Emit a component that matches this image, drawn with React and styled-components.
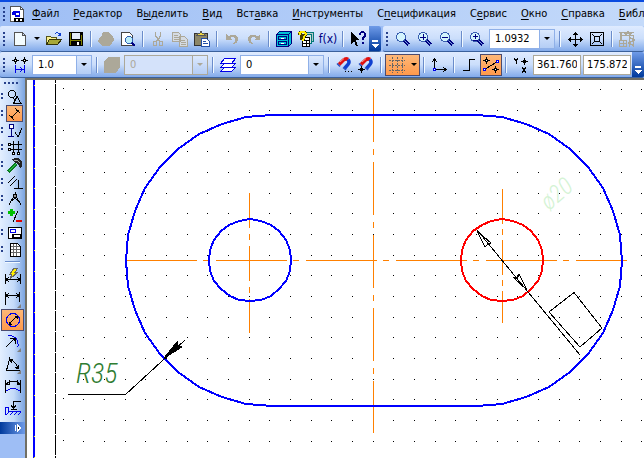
import styled, { createGlobalStyle } from "styled-components"

const GlobalStyle = createGlobalStyle`
  * {
    box-sizing: border-box;
  }
  body {
    margin: 0;
    overflow: hidden;
    font-family: "DejaVu Sans Condensed", "DejaVu Sans", sans-serif;
    font-size: 11px;
    color: #000;
  }
  button, select, input {
    font: inherit;
    color: inherit;
  }
`;

const K = "#000";
const B = "#0000e8";
const G = "#aca899";
const N = "#000080";

const magnifier = (
  <>
    <path d="M9 9l5 5" stroke={N} strokeWidth="3" />
    <path d="M10 10l4 4" stroke="#7ba4e0" />
    <circle cx="6" cy="6" r="4.5" fill="#d4f4fc" stroke="#3a5fb0" />
  </>
);

const magnet = (
  <g fill="none" shapeRendering="auto">
    <path d="M3 7.500L7.500 3Q10 1 12 2.500" stroke="#e01010" strokeWidth="3.500" />
    <path d="M12 2.500Q14 5 12 7.500L8.500 11.500" stroke="#1040d0" strokeWidth="3.500" />
    <path d="M4 5L8 1.500" stroke="#ff9080" />
    <path d="M1 6.500l3 3M7 10.500l3 2.500" stroke="#2a50c0" strokeWidth="1.500" />
  </g>
);

const icons = {
  doc: (
    <>
      <path d="M1.500.5h10l3 3v12h-13z" fill="#fff" stroke="#555" />
      <path d="M11.500.5v3h3" fill="none" stroke="#555" />
      <path d="M3 6h1v3H3zM4 5h7v6H6V9H4z" fill="#0000e0" />
      <path d="M7 7h3v2H7z" fill="#fff" />
      <path d="M5 12h10v4H5z" fill={K} />
      <path d="M7 13h2v2H7zM11 13h2v2h-2z" fill="#fff" />
    </>
  ),
  fresh: <path d="M2.500 1.500h8l3 3v10h-11zM10.500 1.500v3h3" fill="#f4fcff" stroke="#555" />,
  open: (
    <>
      <path d="M.5 13.500v-8h4l1 1h5v3" fill="#f8f090" stroke="#55551a" />
      <path d="M.5 13.500l3-5h12l-4 5z" fill="#a8a838" stroke="#33330a" />
      <path d="M9 3Q12 0 14 4M12 4h3M14.500 2v3" fill="none" stroke="#1040d0" />
    </>
  ),
  save: (
    <>
      <path d="M1 1h14v14H1z" fill={K} />
      <path d="M2 2h1v12H2zM13 4h1v10h-1z" fill="#808000" />
      <path d="M4 2h8v6H4z" fill="#e4ecf8" />
      <path d="M3 9h10v1H3z" fill="#808000" />
      <path d="M9 11h2v3H9z" fill="#fff" />
    </>
  ),
  print: <path d="M5 1h6l2 3 2 1 1 4-2 3-3 3H4l-4-4 1-4 3-3z" fill={G} />,
  preview: (
    <>
      <path d="M1.500 1.500h8l3 3v10h-11z" fill="#fff" stroke="#444" />
      <path d="M11 11l4 4" stroke={N} strokeWidth="2" />
      <circle cx="9" cy="9" r="3.500" fill="#bdeef8" stroke="#3060b0" />
    </>
  ),
  cut: (
    <path d="M5.500 1v4l4 5M10.500 1v4L7 10M3.500 10.500h3v4h-3zM9.500 10.500h3v4h-3z" fill="none" stroke={G} strokeWidth="1.500" />
  ),
  copy: (
    <>
      <path d="M.5 1.500h6l2 2v7h-8zM7.500 5.500h5l3 3v7h-8z" fill="#d5dbe3" stroke={G} />
      <path d="M2 4h4M2 6h5M2 8h5M9 9h4M9 11h5M9 13h5" stroke={G} />
    </>
  ),
  paste: (
    <>
      <path d="M.5 2.500h13v12H.5z" fill="#8c8668" stroke="#333" />
      <path d="M3 4h8l-1-2H8L7 0 6 2H4z" fill="#f0d840" stroke="#555" />
      <path d="M7.500 7.500h5l3 3v5h-8z" fill="#fff" stroke="#234fa8" />
      <path d="M9 10h3M9 12h5" stroke="#234fa8" />
    </>
  ),
  undo: <path d="M2 3v6h6L6 7q5-2 5 2 0 3-3 4 6 0 6-5 0-6-10-3z" fill={G} />,
  redo: <path d="M14 3v6H8l2-2q-5-2-5 2 0 3 3 4-6 0-6-5 0-6 10-3z" fill={G} />,
  drawer: (
    <>
      <path d="M.5 3.500l3-3h12v12l-3 3H.5z" fill="#00c4d4" stroke={N} />
      <path d="M.5 3.500h12v12M12.500 3.500l3-3M2.500 5.500h8v3h-8zM2.500 10.500h8v3h-8z" fill="none" stroke={N} />
      <path d="M5 7.500h3M5 12.500h3" stroke="#fff" />
    </>
  ),
  vars: (
    <>
      <path d="M8.500 1.500h7v9h-7z" fill="#b9c6c8" stroke="#007878" />
      <path d="M6.500 3.500h7v9h-7z" fill="#d6e2e2" stroke="#007878" />
      <path d="M4.500 6.500h7v9h-7z" fill="#fff" stroke={K} />
      <path d="M5 9.500h6M5 12.500h6M8.500 10v6" stroke={K} />
      <path d="M1.500 4V2l2-1.500h2L7.500 2v2l-2 2v1h-2V5l1.500-2M3.500 8.500h2" fill="none" stroke="#443d00" strokeWidth="3" />
      <path d="M1.500 4V2l2-1.500h2L7.500 2v2l-2 2v1h-1M3.500 8.500h2" fill="none" stroke="#ffee00" strokeWidth="2" />
    </>
  ),
  help: (
    <>
      <path d="M1 1v12l3-3 2 5h2L6 9h4z" fill={K} />
      <path d="M10 4Q10 1 12.500 1T15 4Q15 6 12.500 7v2M12.500 11v2" fill="none" stroke={N} strokeWidth="2" />
    </>
  ),
  zoom: magnifier,
  zoomIn: <>{magnifier}<path d="M3 6.500h6M6.500 3v6" stroke={N} /></>,
  zoomOut: <>{magnifier}<path d="M3 6.500h6" stroke={N} /></>,
  zoomBoth: <>{magnifier}<path d="M4 5.500h5M6.500 3v5M4 9.500h5" stroke={N} /></>,
  pan: (
    <path d="M8.500 1v15M1 8.500h15M6 3.500h5M6 13.500h5M3.500 6v5M13.500 6v5M7 2.500h3M7 14.500h3M2.500 7v3M14.500 7v3" stroke={K} />
  ),
  fit: (
    <>
      <path d="M1.500 1.500h13v13h-13zM5.500 5.500h5v5h-5z" fill="none" stroke={K} />
      <path d="M3 3l3 3M13 3l-3 3M3 13l3-3M13 13l-3-3" stroke={K} />
    </>
  ),
  crane: (
    <>
      <path d="M0 1.500h15M1 4.500h14M2 1v8M5 1l2 3 2-3 2 3 2-3M10.500 4v12M14.500 4v12M10 6l5 3-5 3 5 3" fill="none" stroke={G} strokeWidth="1.500" />
      <path d="M.5 9.500h7v6h-7zM4.500 9v7M0 12.500h8" fill="none" stroke={G} />
    </>
  ),
  step: (
    <>
      <path d="M0 3.500h7M3.500 0v7M9 3.500h7M12.500 0v7" stroke={K} />
      <path d="M2.500 2.500h2v2h-2zM11.500 2.500h2v2h-2z" fill="#fff" stroke={K} />
      <path d="M3.500 8v8M12.500 8v8M4 12.500h8M8 10.500l3 2-3 2" fill="none" stroke={B} />
    </>
  ),
  cube: <path d="M5 0h11v10l-2 3-3 3H0V5l2-3z" fill={G} />,
  layers: (
    <>
      <path d="M.5 14.500l4-4h11l-4 4z" fill="#fff" stroke={B} />
      <path d="M.5 10.500l4-4h11l-4 4z" fill="#fff" stroke={B} />
      <path d="M.5 6.500l4-5h11l-4 5z" fill="#fff" stroke={B} />
    </>
  ),
  magnet: <>{magnet}<path d="M9 14h1v1H9zM12 14h1v1h-1zM15 14h1v1h-1z" fill={K} /></>,
  magnetPoint: <>{magnet}<path d="M0 12.500h7M3.500 9v7M2.500 11.500h2v2h-2z" fill="#fff" stroke={K} /></>,
  grid: <path d="M0 3.500h16M0 8.500h16M0 13.500h16M3.500 0v16M8.500 0v16M13.500 0v16" stroke="#666" strokeDasharray="2 1" />,
  axes: (
    <>
      <path d="M3.500 2v12M3 12.500h12M1 5l2.500-3L6 5M12 10l3 2.500-3 2.500" fill="none" stroke={K} />
      <path d="M2.500 11.500h2v2h-2z" fill="#fff" stroke={B} />
    </>
  ),
  ortho: <path d="M2 13.500h6.500v-11H14" fill="none" stroke={K} />,
  snap: (
    <>
      <path d="M0 3.500h7M3.500 0v7M9 12.500h7M12.500 9v7" stroke={K} />
      <path d="M2.500 2.500h2v2h-2zM11.500 11.500h2v2h-2z" fill="#fff" stroke={K} />
      <path d="M2 12L14 5" stroke={K} />
      <path d="M.5 11.500h2v2h-2zM13.500 3.500h2v2h-2z" fill="#fff" stroke={B} />
    </>
  ),
  yx: (
    <>
      <path d="M1 1l2 3 2-3M3 4v3M9 10l4 6M13 10l-4 6" fill="none" stroke={K} />
      <path d="M8 4.500h7M11.500 1v7M10.500 3.500h2v2h-2z" fill="#fff" stroke={K} />
    </>
  ),
  shapes: (
    <>
      <circle cx="5" cy="5" r="3.500" fill="none" stroke={K} />
      <path d="M6.500 14.500l3.500-7 4 7zM5 8l4 4" fill="none" stroke={K} />
    </>
  ),
  dims: (
    <>
      <path d="M2 9l5 5M9 2l5 5M4 12l8-8" stroke={K} />
      <path d="M4 12V9l3 3zM12 4H9l3 3z" fill={K} />
    </>
  ),
  marks: (
    <>
      <path d="M2.500 1.500h4v4h-4z" fill="#fff" stroke={N} />
      <path d="M4.500 6v7M1 13.500h6" stroke={N} strokeWidth="1.500" />
      <path d="M8 9l3 5 4-9" fill="none" stroke={K} />
    </>
  ),
  nodes: (
    <>
      <path d="M2 4.500h13M2 9.500h13M6.500 1v12M11.500 1v12" stroke={K} />
      <path d="M1.500 3.500h2v2h-2zM1.500 8.500h2v2h-2zM5.500 12.500h2v2h-2zM10.500 12.500h2v2h-2z" fill="#fff" stroke={K} />
    </>
  ),
  hammer: (
    <>
      <path d="M1 15L9 7" stroke="#0a7a20" strokeWidth="3" />
      <path d="M2 14L9 7" stroke="#30d050" />
      <path d="M4 3l4-2h3l4 4v4l-2 2-2-4-3-1-1-2z" fill="#222" />
      <path d="M7 3h3l3 3" fill="none" stroke="#aaa" />
    </>
  ),
  params: <path d="M1 9l7-7M3 12l7-7M11.500 6v8M7 14.500h9" stroke={K} />,
  compass: (
    <>
      <path d="M2 14L7 5M14 14L9 5M5 10l3-3 3 3" fill="none" stroke={K} />
      <path d="M8 1v2M6.500 3.500h3v3h-3z" fill="#999" stroke={K} />
    </>
  ),
  edit: (
    <>
      <path d="M1 4.500h7M4.500 1v7" stroke="#00c000" strokeWidth="3" />
      <path d="M6 14l5-11" stroke={K} />
      <path d="M9 13h6" stroke="#e00000" strokeWidth="2" />
    </>
  ),
  spec: (
    <>
      <path d="M1.500 2.500h13v11h-13z" fill="#fff" stroke={K} />
      <path d="M3.500 4.500h5v3h-5z" fill="#fff" stroke={B} />
      <path d="M5 9h9v4H5z" fill={K} />
      <path d="M7 10h6v2H7z" fill="#fff" />
    </>
  ),
  report: (
    <>
      <path d="M3.500 1.500h7l3 3v10h-10z" fill="#fff" stroke={K} />
      <path d="M4 4.500h9M4 7.500h9M4 10.500h9M6.500 2v12M9.500 2v12" stroke="#666" />
    </>
  ),
  autoDim: (
    <>
      <path d="M.5 6v10M15.500 6v10M1 11.500h14M4 9l-3 2.500L4 14M12 9l3 2.500-3 2.500" fill="none" stroke={K} />
      <path d="M9 0h4l-3 4h3L5 11l2-5H5z" fill="#ffee00" stroke="#666" />
    </>
  ),
  linear: <path d="M.5 2v13M14.500 2v10M1 5.500h13M4 3l-3 2.500L4 8M11 3l3 2.500L11 8" fill="none" stroke={K} />,
  diameter: (
    <>
      <circle cx="8" cy="8" r="6.500" fill="none" stroke={B} />
      <path d="M4 12l8-8" stroke={K} />
      <path d="M3.500 12.500V9L7 12.500zM12.500 3.500V7L9 3.500z" fill={K} />
    </>
  ),
  radius: (
    <>
      <path d="M3 1Q14 2 13 13" fill="none" stroke={B} />
      <path d="M1 13l9-9M5 4.500h5.500V10" fill="none" stroke={K} />
      <path d="M10 4v4L6 4z" fill={K} />
    </>
  ),
  angle: <path d="M5 1L1.500 14.500H15M5 4Q11 5 13 13M8 3L5 4l2 3M10 11l3 2 1-4" fill="none" stroke={K} />,
  arcLen: (
    <>
      <path d="M.5 2v13M15.500 2v13M1 6Q8 0 15 6M4 2v4H1M12 2v4h3" fill="none" stroke={K} />
      <path d="M1 13Q8 8 15 13" fill="none" stroke={B} />
    </>
  ),
  height: (
    <>
      <path d="M8.500 9V1.500H16M6 5l2.500 4L11 5M6 9.500h6" fill="none" stroke={K} />
      <path d="M.5 15V7.500h3v4H16M1 15l3-3M5 15l3-3M9 15l3-3M13 15l3-3" fill="none" stroke={B} />
    </>
  ),
};

const Icon = ({ name }) => (
  <svg width="16" height="16" viewBox="0 0 16 16" shapeRendering="crispEdges" aria-hidden="true">
    {icons[name]}
  </svg>
);

const Tool = ({ icon, label, active, disabled }) => (
  <ToolButton type="button" aria-label={label} $active={active} disabled={disabled}>
    <Icon name={icon} />
  </ToolButton>
);

const Combo = ({ label, value, width, disabled }) => (
  <ComboBox $width={width} $disabled={disabled}>
    <select aria-label={label} defaultValue={value} disabled={disabled}>
      <option>{value}</option>
    </select>
    <ComboArrow $disabled={disabled}><Triangle $disabled={disabled} /></ComboArrow>
  </ComboBox>
);

const Overflow = () => (
  <Cap type="button" aria-label="Параметры панели">
    <svg width="7" height="8" shapeRendering="crispEdges" aria-hidden="true">
      <path d="M0 0h6v2H0zM0 4h7L3.500 8z" fill="#fff" />
    </svg>
  </Cap>
);

// text before the hot letter, the letter itself, the rest
const menu = [
  ["", "Ф", "айл"],
  ["", "Р", "едактор"],
  ["В", "ы", "делить"],
  ["", "В", "ид"],
  ["Вст", "а", "вка"],
  ["", "И", "нструменты"],
  ["С", "п", "ецификация"],
  ["С", "е", "рвис"],
  ["", "О", "кно"],
  ["", "С", "правка"],
  ["", "Б", "иблиотеки"],
];

const groups = [
  ["shapes", "Геометрия"],
  ["dims", "Размеры"],
  ["marks", "Обозначения"],
  ["nodes", "Обозначения для строительства"],
  ["hammer", "Редактирование"],
  ["params", "Параметризация"],
  ["compass", "Измерения"],
  ["edit", "Выделение"],
  ["spec", "Спецификация"],
  ["report", "Отчеты"],
];

const dimensions = [
  ["autoDim", "Авторазмер"],
  ["linear", "Линейный размер", true],
  ["diameter", "Диаметральный размер"],
  ["radius", "Радиальный размер", true],
  ["angle", "Угловой размер", true],
  ["arcLen", "Размер дуги"],
  ["height", "Размер высоты"],
];

const arc = (cx, cy, r, from, to, step) => {
  const points = [];
  for (let a = from; a <= to; a += step) {
    const t = (a * Math.PI) / 180;
    points.push(`${Math.round(cx + r * Math.cos(t))},${Math.round(cy + r * Math.sin(t))}`);
  }
  return points.join(" ");
};

const GRID = 20.67;

const gridDots = () => {
  let d = "";
  for (let i = -1; i < 60; i++) {
    for (let j = 0; j < 50; j++) {
      const x = Math.floor(83.9 + GRID * i);
      const y = Math.floor(89.9 + GRID * j) - (i < 0 ? 1 : 0);
      d += `M${x} ${y}h1v1h-1z`;
    }
  }
  return d;
};

const Drawing = () => (
  <Canvas role="img" aria-label="Чертеж" shapeRendering="crispEdges">
    <g transform="translate(-27 -80)" fill="none">
      <path d={gridDots()} fill="#000" />
      <path d="M34 80V2000" stroke="#0000ff" strokeWidth="2" />
      <path d="M34.500 85V2000" stroke="#ffff00" strokeDasharray="1 19.67" />
      <path d="M55.500 80V2000" stroke="#000" strokeDasharray="19.67 1" strokeDashoffset="-4" />

      <g stroke="#ff8000">
        <path d="M373.500 89V433" strokeDasharray="53 7 6 7" />
        <path d="M126 260.500H627" strokeDasharray="71 6 6 7" />
        <path d="M249.500 193V333" strokeDasharray="35 6 6 6" />
        <path d="M502.500 189V323" strokeDasharray="35 5 6 5" />
      </g>

      <polygon
        points={`${arc(271.5, 260.5, 145.5, 90, 270, 10)} ${arc(476.5, 260.5, 145.5, -90, 90, 10)}`}
        stroke="#0000ff"
        strokeWidth="2"
      />
      <polygon points={arc(250, 260.4, 41, 0, 345, 15)} stroke="#0000ff" strokeWidth="2" />
      <polygon points={arc(502, 260.4, 41, 0, 345, 15)} stroke="#ff0000" strokeWidth="2" />

      <g stroke="#000">
        <path d="M477 230L580 355" />
        <path d="M477 231L491 243L488 244L485 247Z" />
        <path d="M527 290L519 274L517 279L513 277Z" />
        <path d="M574 292.500L602 328L580 347L549 312Z" />
        <path d="M68 394.500H125.500L185 340" />
        <path d="M164 358L177 342V346L182 347Z" fill="#000" />
      </g>

      <DrawingText x="76" y="383" fill="#2f7d32" fontSize="28">R35</DrawingText>
      <DrawingText transform="translate(549 211) rotate(-41)" fill="#d4f3d4" fontSize="24">ø20</DrawingText>
    </g>
  </Canvas>
);

export default function App() {
  return (
    <Window>
      <GlobalStyle />
      <MenuBar>
        <Grip />
        <Icon name="doc" />
        {menu.map(([before, hot, after]) => (
          <MenuItem type="button" key={before + hot + after}>
            {before}<u>{hot}</u>{after}
          </MenuItem>
        ))}
      </MenuBar>

      <Bars>
        <Toolbar>
          <Grip />
          <Tool icon="fresh" label="Создать" />
          <Drop type="button" aria-label="Тип документа"><Triangle /></Drop>
          <Tool icon="open" label="Открыть" />
          <Tool icon="save" label="Сохранить" />
          <Sep />
          <Tool icon="print" label="Печать" disabled />
          <Tool icon="preview" label="Просмотр" />
          <Sep />
          <Tool icon="cut" label="Вырезать" disabled />
          <Tool icon="copy" label="Копировать" disabled />
          <Tool icon="paste" label="Вставить" />
          <Sep />
          <Tool icon="undo" label="Отменить" disabled />
          <Tool icon="redo" label="Повторить" disabled />
          <Sep />
          <Tool icon="drawer" label="Менеджер библиотек" />
          <Tool icon="vars" label="Менеджер документа" />
          <ToolButton type="button"><Formula>f(x)</Formula></ToolButton>
          <Sep />
          <Tool icon="help" label="Справка" />
          <Overflow />
        </Toolbar>
        <Toolbar $grow>
          <Grip />
          <Tool icon="zoom" label="Увеличить рамкой" />
          <Tool icon="zoomIn" label="Увеличить" />
          <Tool icon="zoomOut" label="Уменьшить" />
          <Sep />
          <Tool icon="zoomBoth" label="Масштаб" />
          <Combo label="Текущий масштаб" value="1.0932" width={66} />
          <Sep />
          <Tool icon="pan" label="Сдвинуть" />
          <Tool icon="fit" label="Показать все" />
          <Sep />
          <Tool icon="crane" label="Перестроить" disabled />
        </Toolbar>
      </Bars>

      <Bars>
        <Toolbar $grow>
          <Grip />
          <Tool icon="step" label="Шаг" />
          <Combo label="Шаг курсора" value="1.0" width={60} />
          <Sep />
          <Tool icon="cube" label="Состояния видов" disabled />
          <Combo label="Текущий вид" value="0" width={84} disabled />
          <Sep />
          <Tool icon="layers" label="Слои" />
          <Combo label="Текущий слой" value="0" width={84} />
          <Sep />
          <Tool icon="magnet" label="Настройка привязок" />
          <Tool icon="magnetPoint" label="Запретить привязки" />
          <Sep />
          <WideButton type="button" aria-label="Сетка" $active>
            <Icon name="grid" />
            <Triangle />
          </WideButton>
          <Sep />
          <Tool icon="axes" label="Локальная СК" />
          <Sep />
          <Tool icon="ortho" label="Ортогональное черчение" />
          <Tool icon="snap" label="Округление" active />
          <Sep />
          <Tool icon="yx" label="Координаты" />
          <Coord aria-label="X" defaultValue="361.760" />
          <Coord aria-label="Y" defaultValue="175.872" />
          <Overflow />
        </Toolbar>
      </Bars>

      <Work>
        <Side>
          <Palette>
            <PaletteGrip />
            {groups.map(([icon, label]) => (
              <GroupRow key={icon}>
                <GroupButton type="button" aria-label={label} $active={icon === "dims"}>
                  <Icon name={icon} />
                </GroupButton>
              </GroupRow>
            ))}
            <PaletteLine />
            {dimensions.map(([icon, label, more]) => (
              <DimButton type="button" key={icon} aria-label={label} $active={icon === "diameter"} $more={more}>
                <Icon name={icon} />
              </DimButton>
            ))}
            <PaletteCap type="button" aria-label="Параметры панели">
              <svg width="8" height="8" shapeRendering="crispEdges" aria-hidden="true">
                <path d="M1 1h1v6H1z" fill="#fff" />
                <path d="M3.500 1v6l3-3z" fill="#000" stroke="#fff" />
              </svg>
            </PaletteCap>
          </Palette>
        </Side>
        <Sheet>
          <Drawing />
        </Sheet>
      </Work>
    </Window>
  );
}

const Window = styled.div`
  display: flex;
  flex-direction: column;
  height: 100vh;
  background: #9ebef5;
`;

const MenuBar = styled.nav`
  display: flex;
  flex: none;
  align-items: center;
  height: 26px;
  overflow: hidden;
  border-top: 2px solid #0a4be0;
  background: linear-gradient(90deg, #9ebef5, #c4dafa);
  svg {
    flex: none;
  }
`;

const MenuItem = styled.button`
  flex: none;
  padding: 0 7px;
  border: 0;
  background: none;
  line-height: 20px;
  white-space: nowrap;
  u {
    text-underline-offset: 2px;
  }
`;

const Bars = styled.div`
  display: flex;
  flex: none;
  height: 26px;
  background: #9ebef5;
`;

const Toolbar = styled.div`
  display: flex;
  flex: ${({ $grow }) => ($grow ? "1 1 0" : "none")};
  align-items: center;
  min-width: 0;
  overflow: hidden;
  margin-right: ${({ $grow }) => ($grow ? 0 : 2)}px;
  border-bottom: 1px solid #3b619c;
  border-radius: 2px;
  background: linear-gradient(#dfebff, #cbdefb 50%, #82aaea);
`;

const Grip = styled.span`
  flex: none;
  width: 2px;
  height: 14px;
  margin: 0 4px 0 3px;
  background: repeating-linear-gradient(#27418c 0 2px, transparent 2px 4px);
`;

const ToolButton = styled.button`
  display: flex;
  flex: none;
  align-items: center;
  justify-content: center;
  width: 22px;
  height: 22px;
  padding: 0;
  border: ${({ $active }) => ($active ? "1px solid #4b4b6f" : "0")};
  background: ${({ $active }) => ($active ? "linear-gradient(#fdb878, #ff9a4c)" : "none")};
`;

const WideButton = styled(ToolButton)`
  gap: 6px;
  width: 35px;
`;

const Drop = styled(ToolButton)`
  width: 12px;
`;

const Formula = styled.span`
  color: #000080;
  font-size: 12px;
`;

const Triangle = styled.span`
  flex: none;
  border: 3px solid transparent;
  border-top-color: ${({ $disabled }) => ($disabled ? "#aca899" : "#000")};
  border-bottom: 0;
`;

const Sep = styled.span`
  flex: none;
  width: 2px;
  height: 16px;
  margin: 0 3px;
  border-left: 1px solid #6a8ccb;
  border-right: 1px solid #f1f9ff;
`;

const ComboBox = styled.span`
  display: grid;
  flex: none;
  width: ${({ $width }) => $width}px;
  height: 20px;
  margin: 0 1px;
  border: 1px solid ${({ $disabled }) => ($disabled ? "#aca899" : "#8fb0e8")};
  background: ${({ $disabled }) => ($disabled ? "#d4e2fa" : "#fff")};
  color: ${({ $disabled }) => ($disabled ? "#aca899" : "#000")};
  select {
    grid-area: 1 / 1;
    min-width: 0;
    padding: 0 0 0 5px;
    border: 0;
    appearance: none;
    background: none;
    opacity: 1;
  }
`;

const ComboArrow = styled.span`
  display: flex;
  grid-area: 1 / 1;
  align-items: center;
  justify-content: center;
  justify-self: end;
  width: 15px;
  border-left: 1px solid ${({ $disabled }) => ($disabled ? "#aca899" : "#8fb0e8")};
  background: linear-gradient(#dce9fd, #b4cdf5);
  pointer-events: none;
`;

const Coord = styled.input`
  flex: none;
  width: 48px;
  height: 20px;
  margin: 0 1px;
  padding: 0 3px;
  border: 1px solid #aca899;
  background: #fff;
`;

const Cap = styled.button`
  display: flex;
  flex: none;
  align-items: flex-end;
  align-self: stretch;
  justify-content: center;
  width: 12px;
  margin-left: auto;
  padding: 0 0 3px;
  border: 0;
  background: linear-gradient(#6f9be8, #003a9c);
`;

const Work = styled.div`
  display: flex;
  flex: 1;
  min-height: 0;
`;

const Side = styled.aside`
  flex: none;
  width: 25px;
  overflow: hidden;
`;

const Palette = styled.div`
  display: flex;
  flex-direction: column;
  background: linear-gradient(90deg, #e3efff, #c4daf9 55%, #7ba4e0);
`;

const PaletteGrip = styled.span`
  width: 14px;
  height: 2px;
  margin: 4px 0 4px 4px;
  background: repeating-linear-gradient(90deg, #27418c 0 2px, transparent 2px 4px);
`;

const GroupRow = styled.div`
  display: flex;
  align-items: center;
  height: 17px;
  &::before {
    content: "";
    width: 2px;
    height: 8px;
    margin: 0 3px 0 1px;
    background: repeating-linear-gradient(#27418c 0 2px, transparent 2px 4px);
  }
`;

const GroupButton = styled(ToolButton)`
  width: 17px;
  height: 17px;
`;

const PaletteLine = styled.span`
  width: 15px;
  height: 2px;
  margin: 3px 0 2px 5px;
  border-top: 1px solid #6a8ccb;
  border-bottom: 1px solid #f1f9ff;
`;

const DimButton = styled(ToolButton)`
  position: relative;
  width: 23px;
  margin-left: 1px;
  &::after {
    content: "";
    display: ${({ $more }) => ($more ? "block" : "none")};
    position: absolute;
    right: 3px;
    bottom: 1px;
    border: 2px solid #808080;
    border-top-color: transparent;
    border-left-color: transparent;
  }
`;

const PaletteCap = styled(ToolButton)`
  justify-content: flex-end;
  width: 25px;
  height: 12px;
  margin-top: 3px;
  padding-right: 3px;
  background: linear-gradient(90deg, #003a9c, #6f9be8);
`;

const Sheet = styled.main`
  flex: 1;
  min-width: 0;
  border-top: 2px solid #716f64;
  border-left: 2px solid #716f64;
  background: #fff;
`;

const Canvas = styled.svg`
  display: block;
  width: 100%;
  height: 100%;
`;

const DrawingText = styled.text`
  font-family: "Roboto Condensed", "Liberation Sans Narrow", "Open Sans", sans-serif;
  font-style: italic;
  font-weight: 300;
`;
